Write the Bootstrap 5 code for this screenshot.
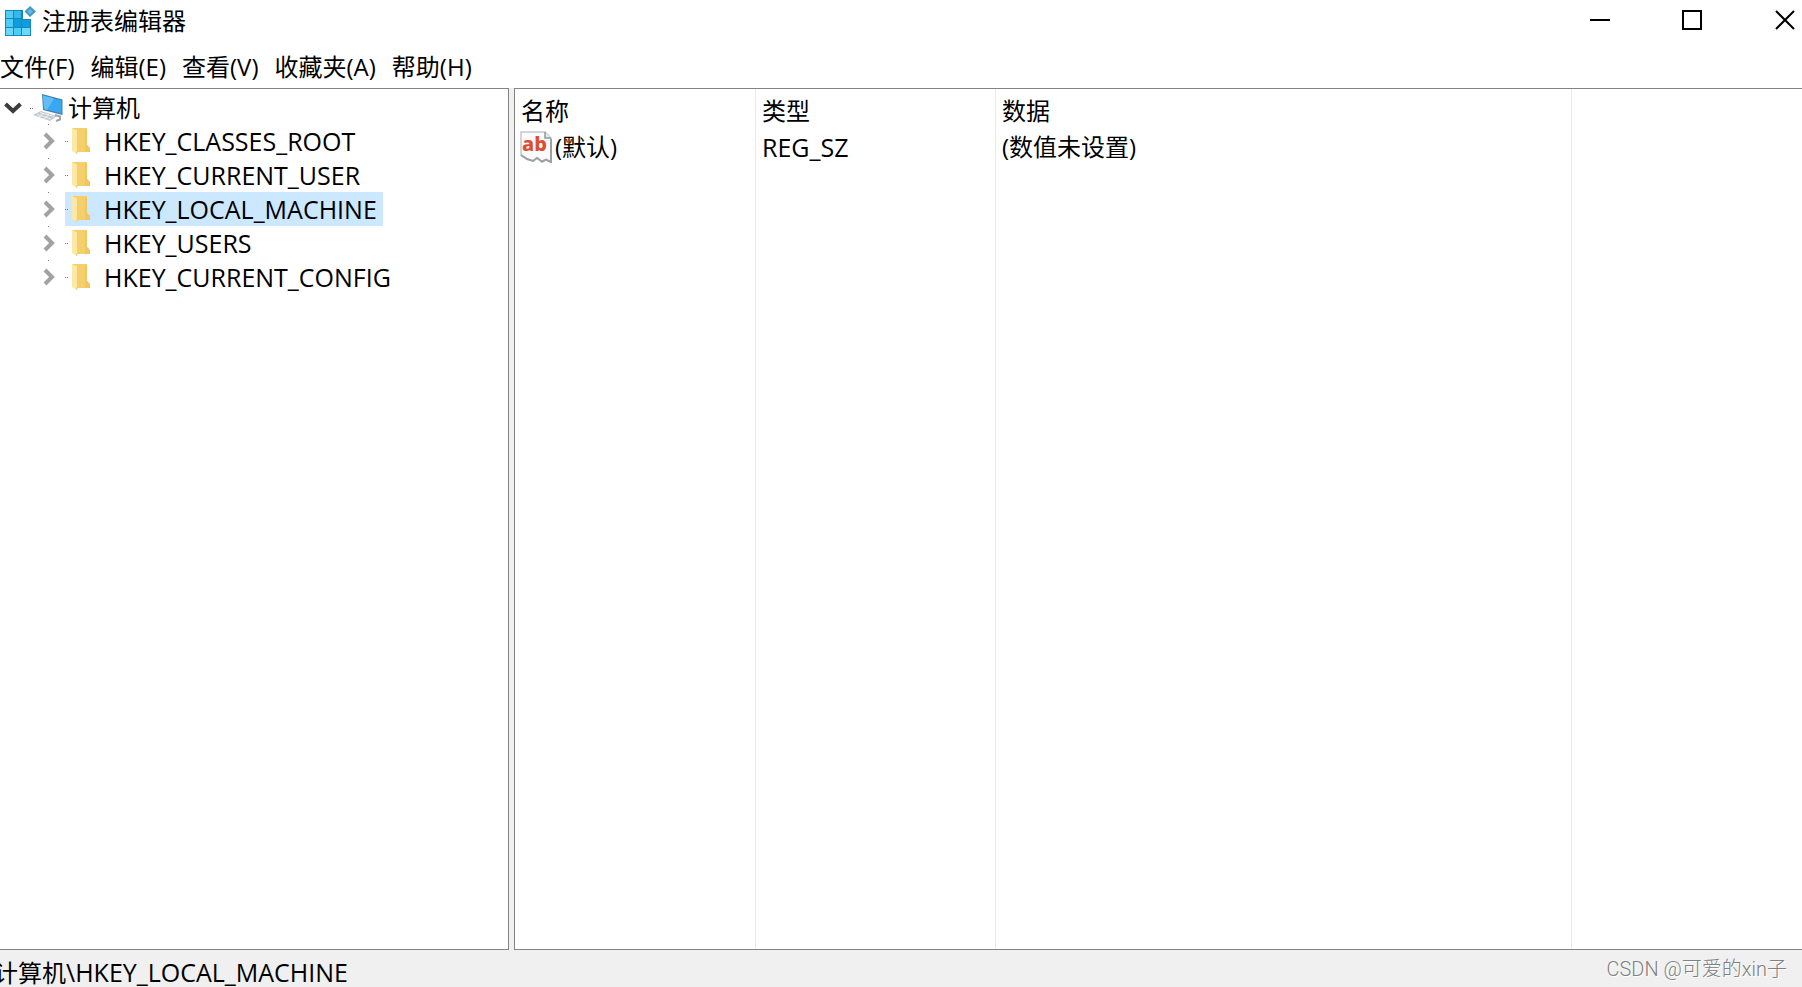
<!DOCTYPE html>
<html lang="zh-CN">
<head>
<meta charset="utf-8">
<meta name="viewport" content="width=device-width, initial-scale=1">
<title>注册表编辑器</title>
<link href="https://cdn.jsdelivr.net/npm/bootstrap@5.3.0/dist/css/bootstrap.min.css" rel="stylesheet">
<style>
  body { font-family: "Open Sans", "Noto Sans CJK SC", sans-serif; font-size: 24px; line-height: 34px; color: #000; background: #fff; }
  button { background: none; border: 0; padding: 0; color: inherit; }
  svg { display: block; flex: none; }
  .title-bar { height: 44px; padding-left: 4px; }
  .title-text { font-size: 24px; font-weight: 400; line-height: 34px; padding-left: 6px; padding-bottom: 2px; }
  .caption-btn { width: 92px; display: flex; justify-content: center; padding-top: 10px; }
  .caption-close { width: 64px; justify-content: flex-end; padding-right: 7px; }
  .menu-bar { height: 44px; gap: 16px; padding-top: 6px; }
  .menu-bar button { white-space: nowrap; line-height: 34px; height: 34px; }
  .panes { gap: 5px; background: #f0f0f0; }
  .pane { background: #fff; border: 1px solid #838383; border-width: 1px 1px 1px 0; }
  .tree-pane { flex: 0 0 509px; padding-top: 1px; }
  .list-pane { border-width: 1px 0 1px 1px; }
  .tree-row { display: flex; align-items: center; height: 34px; }
  .tree-root { padding-left: 4px; padding-top: 2px; }
  .tree-sub { padding-left: 43px; background: linear-gradient(#808080, #808080) 48px 0 / 1px 1px no-repeat; }
  .node { display: flex; align-items: center; height: 34px; white-space: nowrap; }
  .root-label { padding-left: 2px; }
  .key-node { margin-left: 10px; padding-right: 6px; font-size: 25px; }
  .key-node svg { margin-right: 13px; }
  .key-node.selected { background: #cce8ff; }
  .values { table-layout: fixed; width: 100%; height: 100%; border-collapse: separate; border-spacing: 0; }
  .values th, .values td { padding: 0 0 0 6px; font-weight: 400; border-right: 1px solid #e8ebee; white-space: nowrap; vertical-align: middle; }
  .values th:last-child, .values td:last-child { border-right: 0; }
  .values thead th, .values thead td { height: 41px; padding-top: 3px; }
  .values tbody td { height: 34px; }
  .values td.value-name { padding-left: 5px; }
  .values .rest td { height: auto; }
  .value-name div { gap: 3px; }
  .latin { font-size: 25px; }
  .status-bar { height: 37px; background: #f0f0f0; padding-right: 15px; }
  .status-path { text-indent: -6px; padding-top: 5px; white-space: nowrap; }
  .credit { font-family: Roboto, "Noto Sans CJK SC", sans-serif; font-weight: 300; font-size: 20px; color: #808080; padding-top: 2px; text-shadow: 1px 1px 0 #fff; }
</style>
</head>
<body class="d-flex flex-column vh-100 overflow-hidden">

<svg class="d-none" aria-hidden="true">
  <symbol id="chevron" viewBox="0 0 12 18"><path d="M2 2 9 9l-7 7" fill="none" stroke="#a2a2a2" stroke-width="4"/></symbol>
  <symbol id="folder" viewBox="0 0 26 28">
    <path d="M0 14.500h1M2 14.500h1" stroke="#777" stroke-width="1"/>
    <path d="M7 1h15v17l3 3v4H12L7 22z" fill="#f5cf6c"/>
    <path d="M20 2h2v16l3 3v4h-5z" fill="#efc65f"/>
    <path d="M7 1l6 3v19l-1 4-5-3z" fill="#fde8a4"/>
    <path d="M12.500 4v19l-1 4" fill="none" stroke="#f0cc7c" stroke-width="1"/>
  </symbol>
</svg>

<header class="title-bar d-flex align-items-center">
  <svg width="32" height="32" viewBox="0 0 32 32" aria-hidden="true">
    <path d="M1 4h18v9h8v17H1z" fill="#1786bd"/>
    <path d="M2 5h7v7H2zM2 13h7v8H2zM10 22h7v7h-7z" fill="#4fcdf6"/>
    <path d="M10 5h7v7h-7z" fill="#35b9ec"/>
    <path d="M10 13h7v8h-7zM18 14h8v7h-8z" fill="#0f9edb"/>
    <path d="M2 22h7v7H2zM18 22h8v7h-8z" fill="#6bd8f9"/>
    <path d="M26 0 32 5.500 26 11 20.500 5.500z" fill="#4297c4"/>
    <path d="M26 2.500 29 5.500 26 8.500 23 5.500z" fill="#63b8df"/>
  </svg>
  <h1 class="title-text mb-0 me-auto">注册表编辑器</h1>
  <div class="d-flex align-self-start">
    <button class="caption-btn" type="button" aria-label="最小化"><svg width="20" height="20" viewBox="0 0 20 20"><path d="M0 10h20" stroke="#000" stroke-width="2"/></svg></button>
    <button class="caption-btn" type="button" aria-label="最大化"><svg width="20" height="20" viewBox="0 0 20 20"><path d="M1 1h18v18H1z" fill="none" stroke="#000" stroke-width="2"/></svg></button>
    <button class="caption-btn caption-close" type="button" aria-label="关闭"><svg width="20" height="20" viewBox="0 0 20 20"><path d="M1 1l18 18M19 1 1 19" stroke="#000" stroke-width="2"/></svg></button>
  </div>
</header>

<nav class="menu-bar d-flex" aria-label="菜单">
  <button type="button">文件(F)</button>
  <button type="button">编辑(E)</button>
  <button type="button">查看(V)</button>
  <button type="button">收藏夹(A)</button>
  <button type="button">帮助(H)</button>
</nav>

<main class="panes d-flex flex-grow-1">
  <section class="pane tree-pane" aria-label="注册表项">
    <ul class="list-unstyled mb-0">
      <li>
        <div class="tree-row tree-root">
          <button type="button" aria-label="折叠"><svg width="18" height="12" viewBox="0 0 18 12"><path d="M1.500 2 9 9l7.500-7" fill="none" stroke="#3d3d3d" stroke-width="4"/></svg></button>
          <button type="button" class="node ps-2">
            <svg width="36" height="30" viewBox="0 0 36 30" aria-hidden="true">
              <path d="M0 15.500h1M2 15.500h1" stroke="#777"/>
              <path d="M12 1 32.500 6.500V22L13 17z" fill="#3c7fae"/>
              <path d="M13 2.500 31.500 7.500v13L14 16z" fill="#3aa7f2"/>
              <path d="M13 2.500 24 5.500 17 17l-3-1z" fill="#61bdf7"/>
              <path d="M3 22 11 18l16 5-7 5z" fill="#c4c9cd"/>
              <path d="M7 21.500l14 4.500M10 19.500l14 4M9 24l5-4M14 25.500l5-4" stroke="#eef0f1" stroke-width="1"/>
              <path d="M25 22l5 1.500v3l-4 1.500" fill="none" stroke="#9fa7ac" stroke-width="2"/>
            </svg>
            <span class="root-label">计算机</span>
          </button>
        </div>
        <ul class="list-unstyled mb-0">
          <li class="tree-row tree-sub"><button type="button" aria-label="展开"><svg width="12" height="18"><use href="#chevron"/></svg></button><button type="button" class="node key-node"><svg width="26" height="28"><use href="#folder"/></svg>HKEY_CLASSES_ROOT</button></li>
          <li class="tree-row tree-sub"><button type="button" aria-label="展开"><svg width="12" height="18"><use href="#chevron"/></svg></button><button type="button" class="node key-node"><svg width="26" height="28"><use href="#folder"/></svg>HKEY_CURRENT_USER</button></li>
          <li class="tree-row tree-sub"><button type="button" aria-label="展开"><svg width="12" height="18"><use href="#chevron"/></svg></button><button type="button" class="node key-node selected"><svg width="26" height="28"><use href="#folder"/></svg>HKEY_LOCAL_MACHINE</button></li>
          <li class="tree-row tree-sub"><button type="button" aria-label="展开"><svg width="12" height="18"><use href="#chevron"/></svg></button><button type="button" class="node key-node"><svg width="26" height="28"><use href="#folder"/></svg>HKEY_USERS</button></li>
          <li class="tree-row tree-sub"><button type="button" aria-label="展开"><svg width="12" height="18"><use href="#chevron"/></svg></button><button type="button" class="node key-node"><svg width="26" height="28"><use href="#folder"/></svg>HKEY_CURRENT_CONFIG</button></li>
        </ul>
      </li>
    </ul>
  </section>

  <section class="pane list-pane flex-grow-1" aria-label="值">
    <table class="values">
      <colgroup><col style="width:241px"><col style="width:240px"><col style="width:576px"><col></colgroup>
      <thead><tr><th scope="col">名称</th><th scope="col">类型</th><th scope="col">数据</th><td></td></tr></thead>
      <tbody>
        <tr>
          <td class="value-name"><div class="d-flex align-items-center">
            <svg width="32" height="32" viewBox="0 0 32 32" aria-hidden="true">
              <path d="M1 1h24l6 6v24l-5-2-4 2-5-4-4 3-6-2-6-4z" fill="#fbfbfb" stroke="#c3c8cd" stroke-width="1.500"/>
              <path d="M25 1v6h6" fill="#e4e8ec" stroke="#8f979e" stroke-width="1.500"/>
              <path d="M1 24l6 4 6 2 4-3 5 3.500 4-2 5 2.500V8" fill="none" stroke="#9aa1a7" stroke-width="2"/>
              <text x="2" y="20" font-family="Noto Sans, sans-serif" font-weight="800" font-size="20" fill="#dc5030">ab</text>
            </svg>
            <span>(默认)</span>
          </div></td>
          <td class="latin">REG_SZ</td><td>(数值未设置)</td><td></td>
        </tr>
        <tr class="rest"><td></td><td></td><td></td><td></td></tr>
      </tbody>
    </table>
  </section>
</main>

<footer class="status-bar d-flex justify-content-between">
  <div class="status-path">计算机<span class="latin">\HKEY_LOCAL_MACHINE</span></div>
  <div class="credit">CSDN @可爱的xin子</div>
</footer>

<script src="https://cdn.jsdelivr.net/npm/bootstrap@5.3.0/dist/js/bootstrap.bundle.min.js"></script>
</body>
</html>
